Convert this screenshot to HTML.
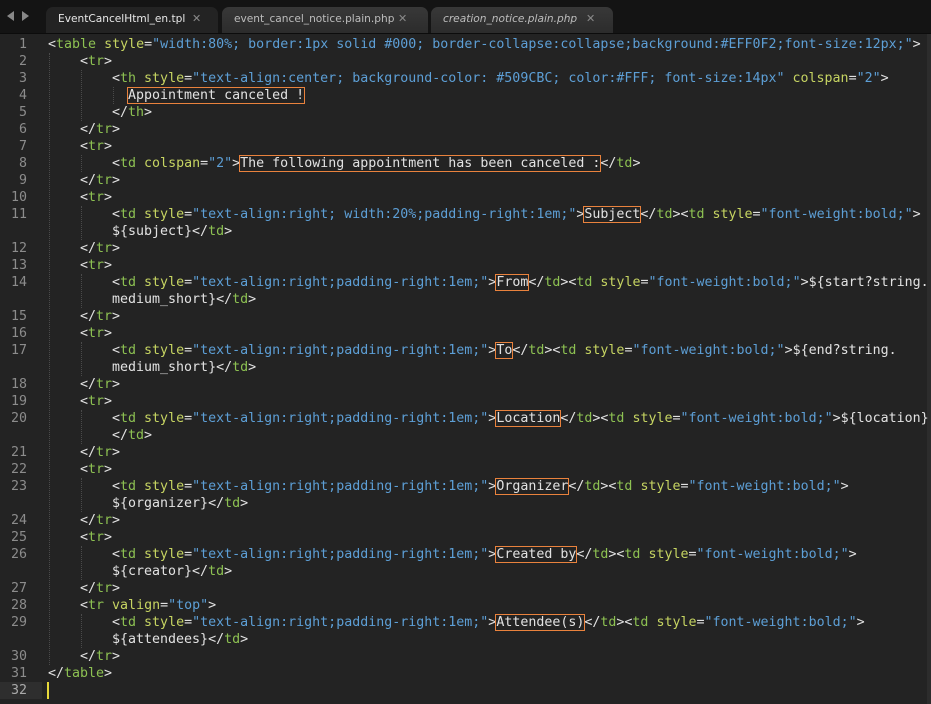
<!DOCTYPE html>
<html><head><meta charset="utf-8"><style>
html,body{margin:0;padding:0;}
body{width:931px;height:704px;background:#232323;position:relative;overflow:hidden;font-family:"DejaVu Sans Mono","Liberation Mono",monospace;font-size:13.3px;}
#bar{position:absolute;left:0;top:0;width:931px;height:33px;background:#141414;border-bottom:1px solid #0c0c0c;}
.tab{position:absolute;top:7px;height:26px;border-radius:7px 7px 0 0;font-family:"DejaVu Sans","Liberation Sans",sans-serif;font-size:10.6px;line-height:24px;box-sizing:border-box;padding-left:12px;color:#bdbdbd;white-space:nowrap;}
.tab .x{position:absolute;top:0;color:#8a8a8a;font-size:11px;}
.t1{left:46px;width:172px;background:#232323;color:#e8e8e8;}
.t2{left:222px;width:206px;background:linear-gradient(#383838,#2c2c2c);}
.t3{left:431px;width:182px;background:linear-gradient(#383838,#2c2c2c);font-style:italic;}
.arr{position:absolute;top:11px;width:0;height:0;border-top:5px solid transparent;border-bottom:5px solid transparent;}
.r{position:absolute;height:17px;line-height:17px;white-space:pre;color:#e2e2e2;}
.n{position:absolute;left:0;width:27px;text-align:right;height:17px;line-height:17px;color:#8c8c8c;}
.t{color:#8dc152;} .a{color:#c6d462;} .s{color:#5d9fd6;}
.b{outline:1px solid #e9823d;outline-offset:0px;}
.g{position:absolute;width:0;border-left:1px dotted #4a4a4a;}
#ed{position:absolute;left:0;top:1px;width:931px;height:703px;}
</style></head><body>
<div id="bar">
<div class="arr" style="left:7px;border-right:7px solid #888;"></div>
<div class="arr" style="left:22px;border-left:7px solid #888;"></div>
<div class="tab t1">EventCancelHtml_en.tpl<span class="x" style="left:146px">✕</span></div>
<div class="tab t2">event_cancel_notice.plain.php<span class="x" style="left:176px">✕</span></div>
<div class="tab t3">creation_notice.plain.php<span class="x" style="left:155px;font-style:normal">✕</span></div>
</div>
<div style="position:absolute;left:927px;top:34px;width:4px;height:670px;background:#2c2c2c;"></div>
<div id="ed">
<div style="position:absolute;left:0;top:681px;width:42px;height:17px;background:#2e2e2e;"></div>

<div class="g" style="left:49px;top:52px;height:612px;"></div>
<div class="g" style="left:81px;top:69px;height:51px;"></div>
<div class="g" style="left:113px;top:86px;height:17px;"></div>
<div class="g" style="left:81px;top:154px;height:17px;"></div>
<div class="g" style="left:81px;top:205px;height:34px;"></div>
<div class="g" style="left:81px;top:273px;height:34px;"></div>
<div class="g" style="left:81px;top:341px;height:34px;"></div>
<div class="g" style="left:81px;top:409px;height:34px;"></div>
<div class="g" style="left:81px;top:477px;height:34px;"></div>
<div class="g" style="left:81px;top:545px;height:34px;"></div>
<div class="g" style="left:81px;top:613px;height:34px;"></div>

<div class="n" style="top:35px">1</div><div class="r" style="top:35px;left:48px">&lt;<span class="t">table</span> <span class="a">style</span>=<span class="s">"width:80%; border:1px solid #000; border-collapse:collapse;background:#EFF0F2;font-size:12px;"</span>&gt;</div>
<div class="n" style="top:52px">2</div><div class="r" style="top:52px;left:80px">&lt;<span class="t">tr</span>&gt;</div>
<div class="n" style="top:69px">3</div><div class="r" style="top:69px;left:112px">&lt;<span class="t">th</span> <span class="a">style</span>=<span class="s">"text-align:center; background-color: #509CBC; color:#FFF; font-size:14px"</span> <span class="a">colspan</span>=<span class="s">"2"</span>&gt;</div>
<div class="n" style="top:86px">4</div><div class="r" style="top:86px;left:128px"><span class="b">Appointment canceled !</span></div>
<div class="n" style="top:103px">5</div><div class="r" style="top:103px;left:112px">&lt;/<span class="t">th</span>&gt;</div>
<div class="n" style="top:120px">6</div><div class="r" style="top:120px;left:80px">&lt;/<span class="t">tr</span>&gt;</div>
<div class="n" style="top:137px">7</div><div class="r" style="top:137px;left:80px">&lt;<span class="t">tr</span>&gt;</div>
<div class="n" style="top:154px">8</div><div class="r" style="top:154px;left:112px">&lt;<span class="t">td</span> <span class="a">colspan</span>=<span class="s">"2"</span>&gt;<span class="b">The following appointment has been canceled :</span>&lt;/<span class="t">td</span>&gt;</div>
<div class="n" style="top:171px">9</div><div class="r" style="top:171px;left:80px">&lt;/<span class="t">tr</span>&gt;</div>
<div class="n" style="top:188px">10</div><div class="r" style="top:188px;left:80px">&lt;<span class="t">tr</span>&gt;</div>
<div class="n" style="top:205px">11</div><div class="r" style="top:205px;left:112px">&lt;<span class="t">td</span> <span class="a">style</span>=<span class="s">"text-align:right; width:20%;padding-right:1em;"</span>&gt;<span class="b">Subject</span>&lt;/<span class="t">td</span>&gt;&lt;<span class="t">td</span> <span class="a">style</span>=<span class="s">"font-weight:bold;"</span>&gt;</div>
<div class="r" style="top:222px;left:112px">${subject}&lt;/<span class="t">td</span>&gt;</div>
<div class="n" style="top:239px">12</div><div class="r" style="top:239px;left:80px">&lt;/<span class="t">tr</span>&gt;</div>
<div class="n" style="top:256px">13</div><div class="r" style="top:256px;left:80px">&lt;<span class="t">tr</span>&gt;</div>
<div class="n" style="top:273px">14</div><div class="r" style="top:273px;left:112px">&lt;<span class="t">td</span> <span class="a">style</span>=<span class="s">"text-align:right;padding-right:1em;"</span>&gt;<span class="b">From</span>&lt;/<span class="t">td</span>&gt;&lt;<span class="t">td</span> <span class="a">style</span>=<span class="s">"font-weight:bold;"</span>&gt;${start?string.</div>
<div class="r" style="top:290px;left:112px">medium_short}&lt;/<span class="t">td</span>&gt;</div>
<div class="n" style="top:307px">15</div><div class="r" style="top:307px;left:80px">&lt;/<span class="t">tr</span>&gt;</div>
<div class="n" style="top:324px">16</div><div class="r" style="top:324px;left:80px">&lt;<span class="t">tr</span>&gt;</div>
<div class="n" style="top:341px">17</div><div class="r" style="top:341px;left:112px">&lt;<span class="t">td</span> <span class="a">style</span>=<span class="s">"text-align:right;padding-right:1em;"</span>&gt;<span class="b">To</span>&lt;/<span class="t">td</span>&gt;&lt;<span class="t">td</span> <span class="a">style</span>=<span class="s">"font-weight:bold;"</span>&gt;${end?string.</div>
<div class="r" style="top:358px;left:112px">medium_short}&lt;/<span class="t">td</span>&gt;</div>
<div class="n" style="top:375px">18</div><div class="r" style="top:375px;left:80px">&lt;/<span class="t">tr</span>&gt;</div>
<div class="n" style="top:392px">19</div><div class="r" style="top:392px;left:80px">&lt;<span class="t">tr</span>&gt;</div>
<div class="n" style="top:409px">20</div><div class="r" style="top:409px;left:112px">&lt;<span class="t">td</span> <span class="a">style</span>=<span class="s">"text-align:right;padding-right:1em;"</span>&gt;<span class="b">Location</span>&lt;/<span class="t">td</span>&gt;&lt;<span class="t">td</span> <span class="a">style</span>=<span class="s">"font-weight:bold;"</span>&gt;${location}</div>
<div class="r" style="top:426px;left:112px">&lt;/<span class="t">td</span>&gt;</div>
<div class="n" style="top:443px">21</div><div class="r" style="top:443px;left:80px">&lt;/<span class="t">tr</span>&gt;</div>
<div class="n" style="top:460px">22</div><div class="r" style="top:460px;left:80px">&lt;<span class="t">tr</span>&gt;</div>
<div class="n" style="top:477px">23</div><div class="r" style="top:477px;left:112px">&lt;<span class="t">td</span> <span class="a">style</span>=<span class="s">"text-align:right;padding-right:1em;"</span>&gt;<span class="b">Organizer</span>&lt;/<span class="t">td</span>&gt;&lt;<span class="t">td</span> <span class="a">style</span>=<span class="s">"font-weight:bold;"</span>&gt;</div>
<div class="r" style="top:494px;left:112px">${organizer}&lt;/<span class="t">td</span>&gt;</div>
<div class="n" style="top:511px">24</div><div class="r" style="top:511px;left:80px">&lt;/<span class="t">tr</span>&gt;</div>
<div class="n" style="top:528px">25</div><div class="r" style="top:528px;left:80px">&lt;<span class="t">tr</span>&gt;</div>
<div class="n" style="top:545px">26</div><div class="r" style="top:545px;left:112px">&lt;<span class="t">td</span> <span class="a">style</span>=<span class="s">"text-align:right;padding-right:1em;"</span>&gt;<span class="b">Created by</span>&lt;/<span class="t">td</span>&gt;&lt;<span class="t">td</span> <span class="a">style</span>=<span class="s">"font-weight:bold;"</span>&gt;</div>
<div class="r" style="top:562px;left:112px">${creator}&lt;/<span class="t">td</span>&gt;</div>
<div class="n" style="top:579px">27</div><div class="r" style="top:579px;left:80px">&lt;/<span class="t">tr</span>&gt;</div>
<div class="n" style="top:596px">28</div><div class="r" style="top:596px;left:80px">&lt;<span class="t">tr</span> <span class="a">valign</span>=<span class="s">"top"</span>&gt;</div>
<div class="n" style="top:613px">29</div><div class="r" style="top:613px;left:112px">&lt;<span class="t">td</span> <span class="a">style</span>=<span class="s">"text-align:right;padding-right:1em;"</span>&gt;<span class="b">Attendee(s)</span>&lt;/<span class="t">td</span>&gt;&lt;<span class="t">td</span> <span class="a">style</span>=<span class="s">"font-weight:bold;"</span>&gt;</div>
<div class="r" style="top:630px;left:112px">${attendees}&lt;/<span class="t">td</span>&gt;</div>
<div class="n" style="top:647px">30</div><div class="r" style="top:647px;left:80px">&lt;/<span class="t">tr</span>&gt;</div>
<div class="n" style="top:664px">31</div><div class="r" style="top:664px;left:48px">&lt;/<span class="t">table</span>&gt;</div>
<div class="n" style="top:681px;color:#aaa">32</div>
<div style="position:absolute;left:47px;top:681px;width:2px;height:17px;background:#e6d83a;"></div>
</div>
</body></html>
